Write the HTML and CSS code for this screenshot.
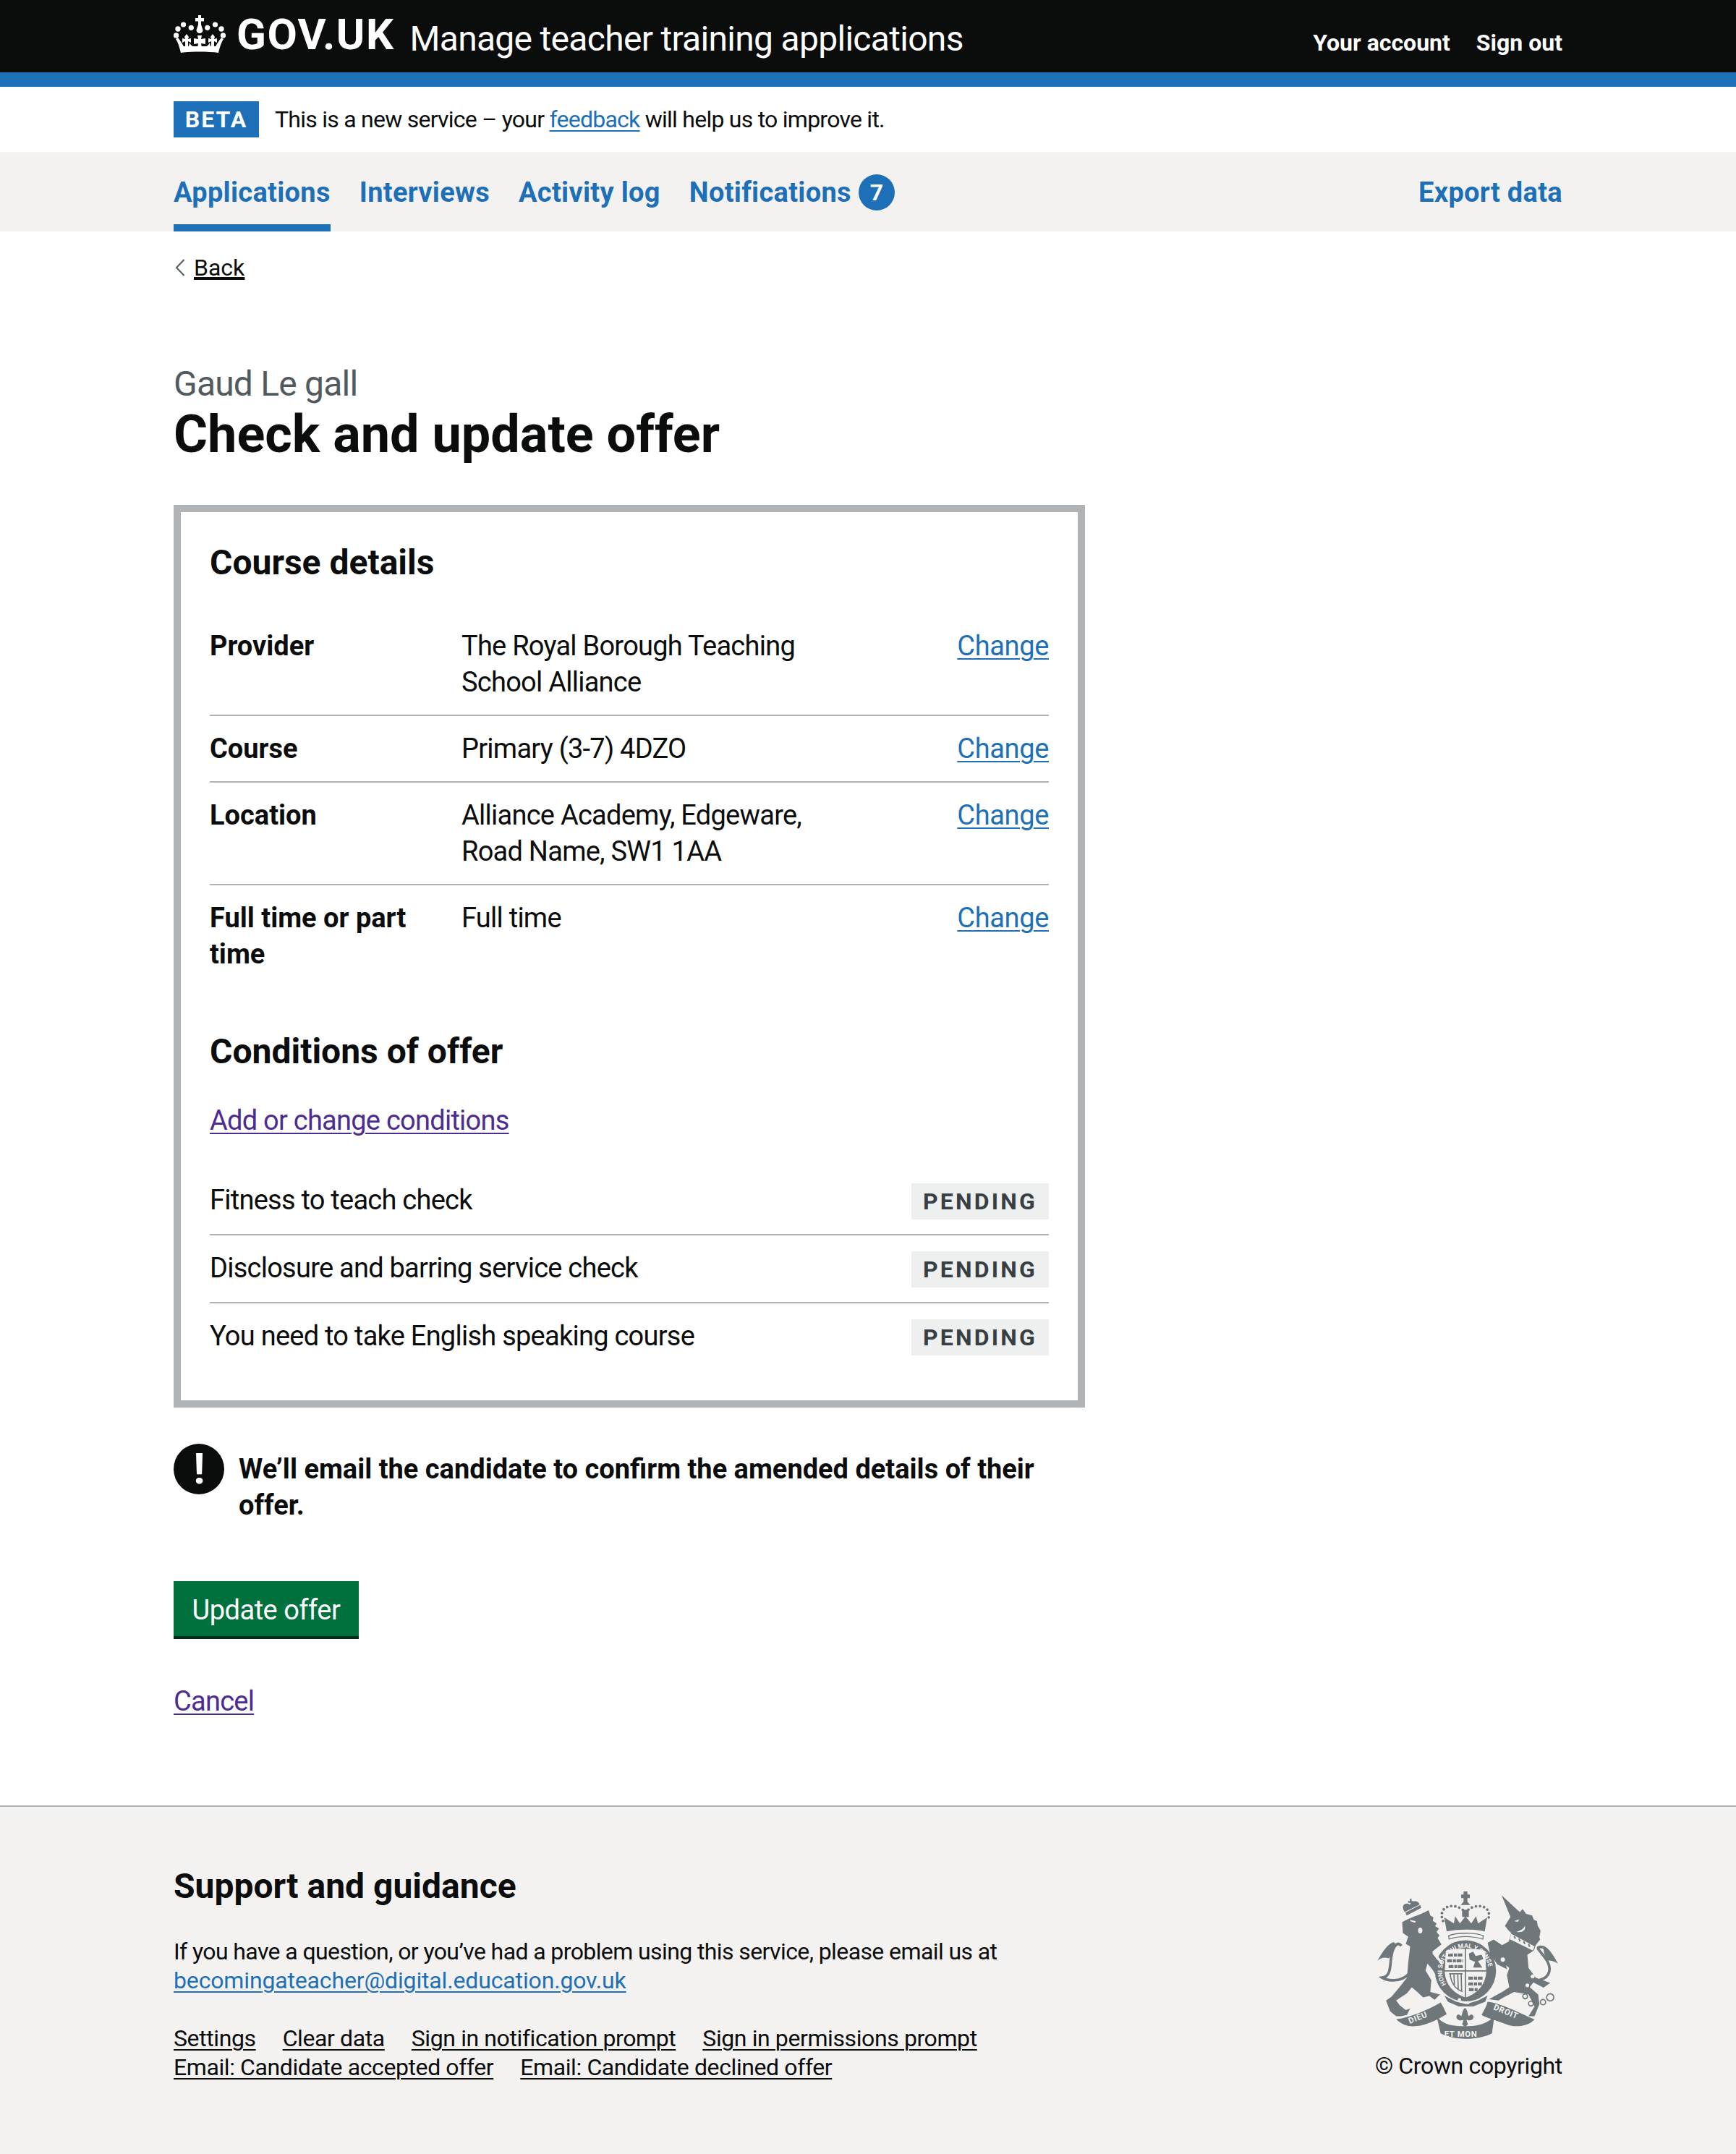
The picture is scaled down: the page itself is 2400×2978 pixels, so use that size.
FILE: index.html
```html
<!DOCTYPE html>
<html lang="en">
<head>
<meta charset="utf-8">
<title>Check and update offer</title>
<link rel="stylesheet" href="styles.css">
</head>
<body>
<header class="masthead">
  <div class="container masthead-inner">
    <div class="brand">
      <svg class="crown" viewBox="0 0 72 52" aria-hidden="true"><g fill="#fff"><circle cx="6" cy="19" r="3.700"/><circle cx="13.500" cy="13" r="3.600"/><circle cx="24.300" cy="17.300" r="3.600"/><circle cx="46.700" cy="17.300" r="3.600"/><circle cx="57.500" cy="13" r="3.600"/><circle cx="66" cy="19" r="3.700"/><circle cx="3.500" cy="28" r="3.700"/><circle cx="68.500" cy="28" r="3.700"/><path d="M34 0h4v4h4v4.500h-4V13l2.500 7.500a4.500 4.500 0 0 1-9 0L34 13V8.500h-4V4h4z"/><path d="M33 28H39L38 33L44 32V40L38 39L39 45H33L34 39L28 40V32L34 33Z"/><path d="M18 26L21 30L20 33L24 32V38L20 36V46H16V36L12 38V32L16 33L15 30Z"/><path d="M54 26L57 30L56 33L60 32V38L56 36V46H52V36L48 38V32L52 33L51 30Z"/><path d="M10 52C8 44 6 37 3 33L6 31C10 36 12 40 14 43H58C60 40 62 36 66 31L69 33C66 37 64 44 62 52C48 50 24 50 10 52Z"/><path d="M22 38C24 42 27 44 30 44H42C45 44 48 42 50 38L52 47H20Z"/></g></svg>
      <span class="logotype">GOV.UK</span>
      <span class="service">Manage teacher training applications</span>
    </div>
    <nav class="account-links">
      <a href="#">Your account</a>
      <a href="#">Sign out</a>
    </nav>
  </div>
</header>
<div class="bluebar"></div>
<div class="container phase">
  <strong class="phase-tag">BETA</strong>
  <span>This is a new service – your <a class="link" href="#">feedback</a> will help us to improve it.</span>
</div>
<nav class="primary-nav">
  <div class="container nav-inner">
    <ul class="nav-list">
      <li><a class="nav-link active" href="#">Applications</a></li>
      <li><a class="nav-link" href="#">Interviews</a></li>
      <li><a class="nav-link" href="#">Activity log</a></li>
      <li><a class="nav-link" href="#">Notifications<span class="count">7</span></a></li>
    </ul>
    <a class="nav-link" href="#">Export data</a>
  </div>
</nav>
<main class="container main">
  <a class="back" href="#"><svg class="chevron" viewBox="0 0 14 24" aria-hidden="true"><path d="M12.500 1 2 12l10.500 11" fill="none" stroke="#505a5f" stroke-width="2"/></svg><span>Back</span></a>
  <p class="caption">Gaud Le gall</p>
  <h1 class="title">Check and update offer</h1>
  <section class="card">
    <h2 class="h-m">Course details</h2>
    <dl class="summary">
      <div class="summary-row"><dt>Provider</dt><dd>The Royal Borough Teaching School Alliance</dd><div class="action"><a class="link" href="#">Change</a></div></div>
      <div class="summary-row"><dt>Course</dt><dd>Primary (3-7) 4DZO</dd><div class="action"><a class="link" href="#">Change</a></div></div>
      <div class="summary-row"><dt>Location</dt><dd>Alliance Academy, Edgeware, Road Name, SW1 1AA</dd><div class="action"><a class="link" href="#">Change</a></div></div>
      <div class="summary-row last"><dt>Full time or part time</dt><dd>Full time</dd><div class="action"><a class="link" href="#">Change</a></div></div>
    </dl>
    <h2 class="h-m conditions-title">Conditions of offer</h2>
    <p class="add-link"><a class="link visited" href="#">Add or change conditions</a></p>
    <ul class="conditions">
      <li><span>Fitness to teach check</span><strong class="tag">PENDING</strong></li>
      <li><span>Disclosure and barring service check</span><strong class="tag">PENDING</strong></li>
      <li><span>You need to take English speaking course</span><strong class="tag">PENDING</strong></li>
    </ul>
  </section>
  <div class="warning">
    <span class="warning-icon" aria-hidden="true">!</span>
    <strong class="warning-text">We’ll email the candidate to confirm the amended details of their offer.</strong>
  </div>
  <button class="button" type="button">Update offer</button>
  <p class="cancel"><a class="link visited" href="#">Cancel</a></p>
</main>
<footer class="footer">
  <div class="container footer-inner">
    <div class="footer-main">
      <h2 class="h-m footer-title">Support and guidance</h2>
      <p class="footer-text">If you have a question, or you’ve had a problem using this service, please email us at <a class="link" href="#">becomingateacher@digital.education.gov.uk</a></p>
      <ul class="meta">
        <li><a href="#">Settings</a></li>
        <li><a href="#">Clear data</a></li>
        <li><a href="#">Sign in notification prompt</a></li>
        <li><a href="#">Sign in permissions prompt</a></li>
        <li><a href="#">Email: Candidate accepted offer</a></li>
        <li><a href="#">Email: Candidate declined offer</a></li>
      </ul>
    </div>
    <div class="footer-crest">
      <svg class="crest" viewBox="60 60 780 640" role="img" aria-label="Royal coat of arms">
        <defs>
          <path id="ring-path" d="M358 458A97 97 0 1 1 518 458"/>
        </defs>
        <g class="ink">
          <path d="M175 200C205 180 250 170 285 150L292 172L305 180L302 194L318 205L312 216L328 226L318 240L330 255L322 265L338 292L300 322L318 352L345 405L348 425L328 442L300 395L280 372L272 400L296 440L292 490L332 500L310 522L288 506L262 512L238 490L215 470L195 495L150 525L165 545L190 565L208 558L195 585L170 590L150 590L125 570L108 525L130 510L160 475L195 430L200 370L208 300L190 290L200 260L178 245Z"/>
          <path class="ink-line" d="M205 412C170 450 115 445 92 430C135 425 120 370 135 320C145 290 160 282 172 298"/>
          <path d="M140 282C115 290 95 320 72 360C90 345 105 345 120 350L135 330C138 315 142 300 150 292Z"/>
          <path d="M188 160L250 128L254 140L194 172Z"/>
          <path d="M185 156C165 125 195 115 207 127C212 108 245 108 247 127L188 156Z"/>
          <path d="M200 112H207V102H214V112H221V119H200Z"/>
          <path d="M588 88L655 150L665 158L675 145L690 165L715 172L722 190L735 195L738 215L750 235L745 262L748 272L730 295L722 318L695 335L700 390L730 430L790 452L762 472L720 450L705 470L740 500L745 540L725 590L700 590L725 550L700 500L640 490L600 510L575 525L535 520L590 490L620 470L610 420L620 390L570 350L582 320L530 285L555 272L590 295L618 280L628 245L615 232L602 215L625 178Z"/>
          <path class="ink-line" d="M745 440C790 430 800 390 770 350C750 320 735 310 740 305C760 295 775 310 790 335"/>
          <path d="M760 298C785 305 805 340 822 372C805 360 790 358 775 358L765 330Z"/>
          <path d="M360 238L350 180L390 205L395 175L415 205L438 175L462 205L482 175L490 205L528 180L518 238C470 228 410 228 360 238Z"/>
          <path class="crown-band" d="M368 256C400 242 480 242 512 256L510 270C470 256 410 256 370 270Z"/>
          <path d="M430 100H420V85H430V72H446V85H456V100H446V115L458 128H418L430 115Z"/>
          <path d="M424 148H452V178H424Z"/>
          <path class="ink-dots" d="M345 195C325 150 360 125 400 135C420 140 430 150 438 160C446 150 456 140 476 135C516 125 550 150 530 195"/>
          <path d="M530 285L595 320L610 395L570 375L540 330Z"/>
          <circle class="ring" cx="438" cy="402" r="108"/>
          <path class="shield" d="M354 318C380 305 495 305 522 318L526 410C520 470 480 500 438 515C396 500 356 470 350 410Z"/>
          <path class="shield-cross" d="M350 402H526M438 308V515"/>
          <path class="lions" d="M366 336H428M362 360H428M368 384H428M450 432H512M450 456H506M452 480H490"/>
          <path class="rampant" d="M452 330L470 322L480 340L505 335L512 352L490 362L508 388H470L478 365L455 355Z"/>
          <path class="harp" d="M370 414H426M375 414C376 450 395 478 426 488M390 418L392 460M406 418L408 476M420 416L422 484"/>
          <path d="M350 505L400 530L440 540L490 525L530 505L520 530L470 550H410L365 530Z"/>
          <path d="M150 603C210 595 280 565 335 533C345 550 355 570 360 582C320 605 280 628 230 632C195 635 170 622 150 603Z"/>
          <path d="M318 590C345 625 380 632 436 632C495 632 530 620 558 590L548 662C490 692 390 692 335 662Z"/>
          <path d="M530 530C580 535 650 570 725 604C700 630 650 640 610 625C575 610 530 600 505 585C515 565 525 550 530 530Z"/>
          <path d="M436 555C450 570 445 580 452 590C465 575 478 590 468 602C458 612 446 605 442 605L448 625L436 635L424 625L430 605C426 605 414 612 404 602C394 590 407 575 420 590C427 580 422 570 436 555Z"/>
        </g>
        <g class="crest-knock">
          <path d="M207 190L232 196L228 202L210 196Z"/>
          <ellipse cx="250" cy="234" rx="9" ry="12"/>
          <circle cx="603" cy="272" r="9"/>
          <circle cx="593" cy="355" r="9"/>
          <circle cx="725" cy="380" r="9"/>
          <circle cx="717" cy="425" r="8"/>
          <circle cx="695" cy="462" r="8"/>
          <circle cx="413" cy="522" r="7"/>
          <circle cx="448" cy="534" r="7"/>
          <path d="M640 195L662 188L655 198Z"/>
          <path d="M685 215C690 235 670 245 650 240C665 235 680 228 685 215Z"/>
          <path d="M628 248L725 300L718 318L622 270Z"/>
          <path d="M310 322L345 370L340 378L300 330Z"/>
        </g>
        <path class="collar" d="M645 268L640 258M665 280L660 268M685 291L680 279M705 302L700 290"/>
        <g class="crest-rings">
          <circle cx="686" cy="508" r="10"/>
          <circle cx="710" cy="538" r="10"/>
          <circle cx="760" cy="532" r="11"/>
          <circle cx="790" cy="512" r="15"/>
        </g>
        <text class="ring-text"><textPath href="#ring-path">HONI SOIT QUI MAL Y PENSE</textPath></text>
        <text class="motto" x="207" y="622" transform="rotate(-22 207 622)">DIEU</text>
        <text class="motto" x="350" y="676">ET MON</text>
        <text class="motto" x="552" y="562" transform="rotate(22 552 562)">DROIT</text>
      </svg>
      <p class="copyright">© Crown copyright</p>
    </div>
  </div>
</footer>
</body>
</html>
```
FILE: styles.css
```css
* { box-sizing: border-box; }
html, body { margin: 0; padding: 0; }
body {
  display: flex;
  flex-direction: column;
  min-height: 100vh;
  font-family: Roboto, "Noto Sans", "Liberation Sans", sans-serif;
  font-size: 38px;
  line-height: 50px;
  letter-spacing: -0.75px;
  color: #0b0c0c;
  background: #fff;
}
strong, dt, h1, h2 { letter-spacing: 0; }
ul, dl, dd, p, h1, h2 { margin: 0; padding: 0; }
ul { list-style: none; }
.container { width: 1920px; margin: 0 auto; }
.link { color: #1d70b8; text-decoration: underline; text-decoration-thickness: 2px; text-underline-offset: 4px; }
.link.visited { color: #4c2c92; }

.masthead { background: #0b0c0c; height: 100px; color: #fff; }
.masthead-inner { display: flex; justify-content: space-between; height: 100px; }
.brand { display: flex; align-items: center; height: 100px; }
.crown { width: 72px; height: 52px; margin-right: 15px; margin-top: -6px; }
.logotype { font-size: 60px; font-weight: 700; line-height: 100px; margin-right: 21px; margin-top: -4px; letter-spacing: 1.5px; }
.service { font-size: 48px; line-height: 100px; margin-top: 7px; letter-spacing: -0.7px; }
.account-links { display: flex; gap: 36px; padding-top: 34px; font-size: 32px; line-height: 50px; font-weight: 700; letter-spacing: 0; }
.account-links a { color: #fff; text-decoration: none; }
.bluebar { height: 20px; background: #1d70b8; }

.phase { display: flex; align-items: center; height: 90px; font-size: 32px; gap: 22px; }
.phase-tag { background: #1d70b8; color: #fff; height: 50px; width: 118px; display: flex; align-items: center; justify-content: center; letter-spacing: 2px; font-size: 32px; }

.primary-nav { background: #f3f2f1; height: 110px; }
.nav-inner { display: flex; justify-content: space-between; }
.nav-list { display: flex; gap: 40px; }
.nav-link { display: flex; align-items: center; height: 110px; padding-top: 12px; font-weight: 700; color: #1d70b8; text-decoration: none; border-bottom: 10px solid transparent; line-height: 50px; letter-spacing: 0.3px; }
.nav-link.active { border-bottom-color: #1d70b8; }
.count { display: flex; align-items: center; justify-content: center; width: 50px; height: 50px; border-radius: 50%; background: #1d70b8; color: #fff; margin-left: 10px; font-size: 32px; letter-spacing: 0; }

.main { padding-bottom: 119px; }
.back { display: inline-flex; align-items: center; gap: 12px; margin-top: 30px; font-size: 32px; line-height: 40px; color: #0b0c0c; letter-spacing: 0; }
.back span { text-decoration: underline; text-decoration-thickness: 2px; text-underline-offset: 4px; }
.chevron { width: 14px; height: 24px; margin-left: 2px; }
.caption { font-size: 48px; line-height: 50px; color: #505a5f; margin-top: 112px; letter-spacing: -0.8px; }
.title { font-size: 72px; line-height: 90px; font-weight: 700; margin-bottom: 52px; }

.card { width: 1260px; border: 10px solid #b1b4b6; padding: 40px 40px 42px; }
.h-m { font-size: 48px; line-height: 60px; font-weight: 700; }
.summary { margin-top: 40px; }
.summary-row { display: grid; grid-template-columns: 348px 1fr auto; padding: 20px 0; border-bottom: 2px solid #b1b4b6; }
.summary-row.last { border-bottom: 0; }
.summary-row dt { font-weight: 700; padding-right: 40px; }
.summary-row dd { padding-right: 167px; }
.action { letter-spacing: -0.35px; }
.conditions-title { margin-top: 60px; }
.add-link { margin-top: 40px; margin-bottom: 40px; }
.conditions li { display: flex; justify-content: space-between; align-items: flex-start; padding: 20px 0; height: 94px; border-bottom: 2px solid #b1b4b6; }
.conditions li:last-child { border-bottom: 0; height: 92px; }
.tag { display: flex; align-items: center; justify-content: center; width: 190px; height: 50px; margin-top: 2px; background: #eef0f0; color: #383f43; font-size: 32px; letter-spacing: 3.2px; }

.warning { display: flex; width: 1260px; gap: 20px; margin-top: 50px; }
.warning-icon { flex: none; display: flex; align-items: center; justify-content: center; width: 70px; height: 70px; border-radius: 50%; background: #0b0c0c; color: #fff; font-size: 60px; font-weight: 700; line-height: 70px; }
.warning-text { padding-top: 10px; font-weight: 700; }
.button { display: block; margin-top: 80px; width: 256px; height: 80px; padding: 0; border: 0; background: #00703c; box-shadow: inset 0 -4px 0 #002d18; color: #fff; font: inherit; letter-spacing: -0.5px; }
.cancel { margin-top: 61px; }

.footer { flex: 1; background: #f3f2f1; border-top: 2px solid #b1b4b6; }
.footer-inner { display: flex; justify-content: space-between; padding-top: 80px; }
.footer-title { line-height: 60px; margin-bottom: 40px; }
.footer-text { font-size: 32px; line-height: 40px; width: 1200px; margin-top: 0; letter-spacing: -0.6px; }
.footer-text .link { letter-spacing: -0.15px; }
.meta { display: flex; flex-wrap: wrap; width: 1200px; column-gap: 37px; margin-top: 40px; font-size: 32px; line-height: 40px; letter-spacing: -0.4px; }
.meta a { color: #0b0c0c; text-decoration: underline; text-decoration-thickness: 2px; text-underline-offset: 4px; }
.footer-crest { display: flex; flex-direction: column; align-items: flex-end; margin-top: 33px; }
.crest { width: 260px; height: 213px; display: block; }
.copyright { font-size: 32px; line-height: 40px; margin-top: 12px; letter-spacing: -0.35px; }

.ink { fill: #6f777b; }
.ink-line { fill: none; stroke: #6f777b; stroke-width: 11; }
.ink-dots { fill: none; stroke: #6f777b; stroke-width: 11; stroke-linecap: round; stroke-dasharray: 0.1 17; }
.crown-band { fill: #f3f2f1; stroke: #6f777b; stroke-width: 4; }
.ring { fill: none; stroke: #6f777b; stroke-width: 38; }
.shield { fill: #f3f2f1; stroke: #6f777b; stroke-width: 4; }
.shield-cross { fill: none; stroke: #6f777b; stroke-width: 5; }
.lions { fill: none; stroke: #6f777b; stroke-width: 13; stroke-dasharray: 20 4 12 3; }
.rampant { fill: #6f777b; }
.harp { fill: none; stroke: #6f777b; stroke-width: 5; }
.crest-knock { fill: #f3f2f1; }
.collar { fill: none; stroke: #6f777b; stroke-width: 6; }
.crest-rings { fill: none; stroke: #6f777b; stroke-width: 5; }
.ring-text { font: 700 26px Roboto, sans-serif; fill: #f3f2f1; letter-spacing: 0; }
.motto { font: 700 34px Roboto, sans-serif; fill: #f3f2f1; letter-spacing: 2px; }
```
